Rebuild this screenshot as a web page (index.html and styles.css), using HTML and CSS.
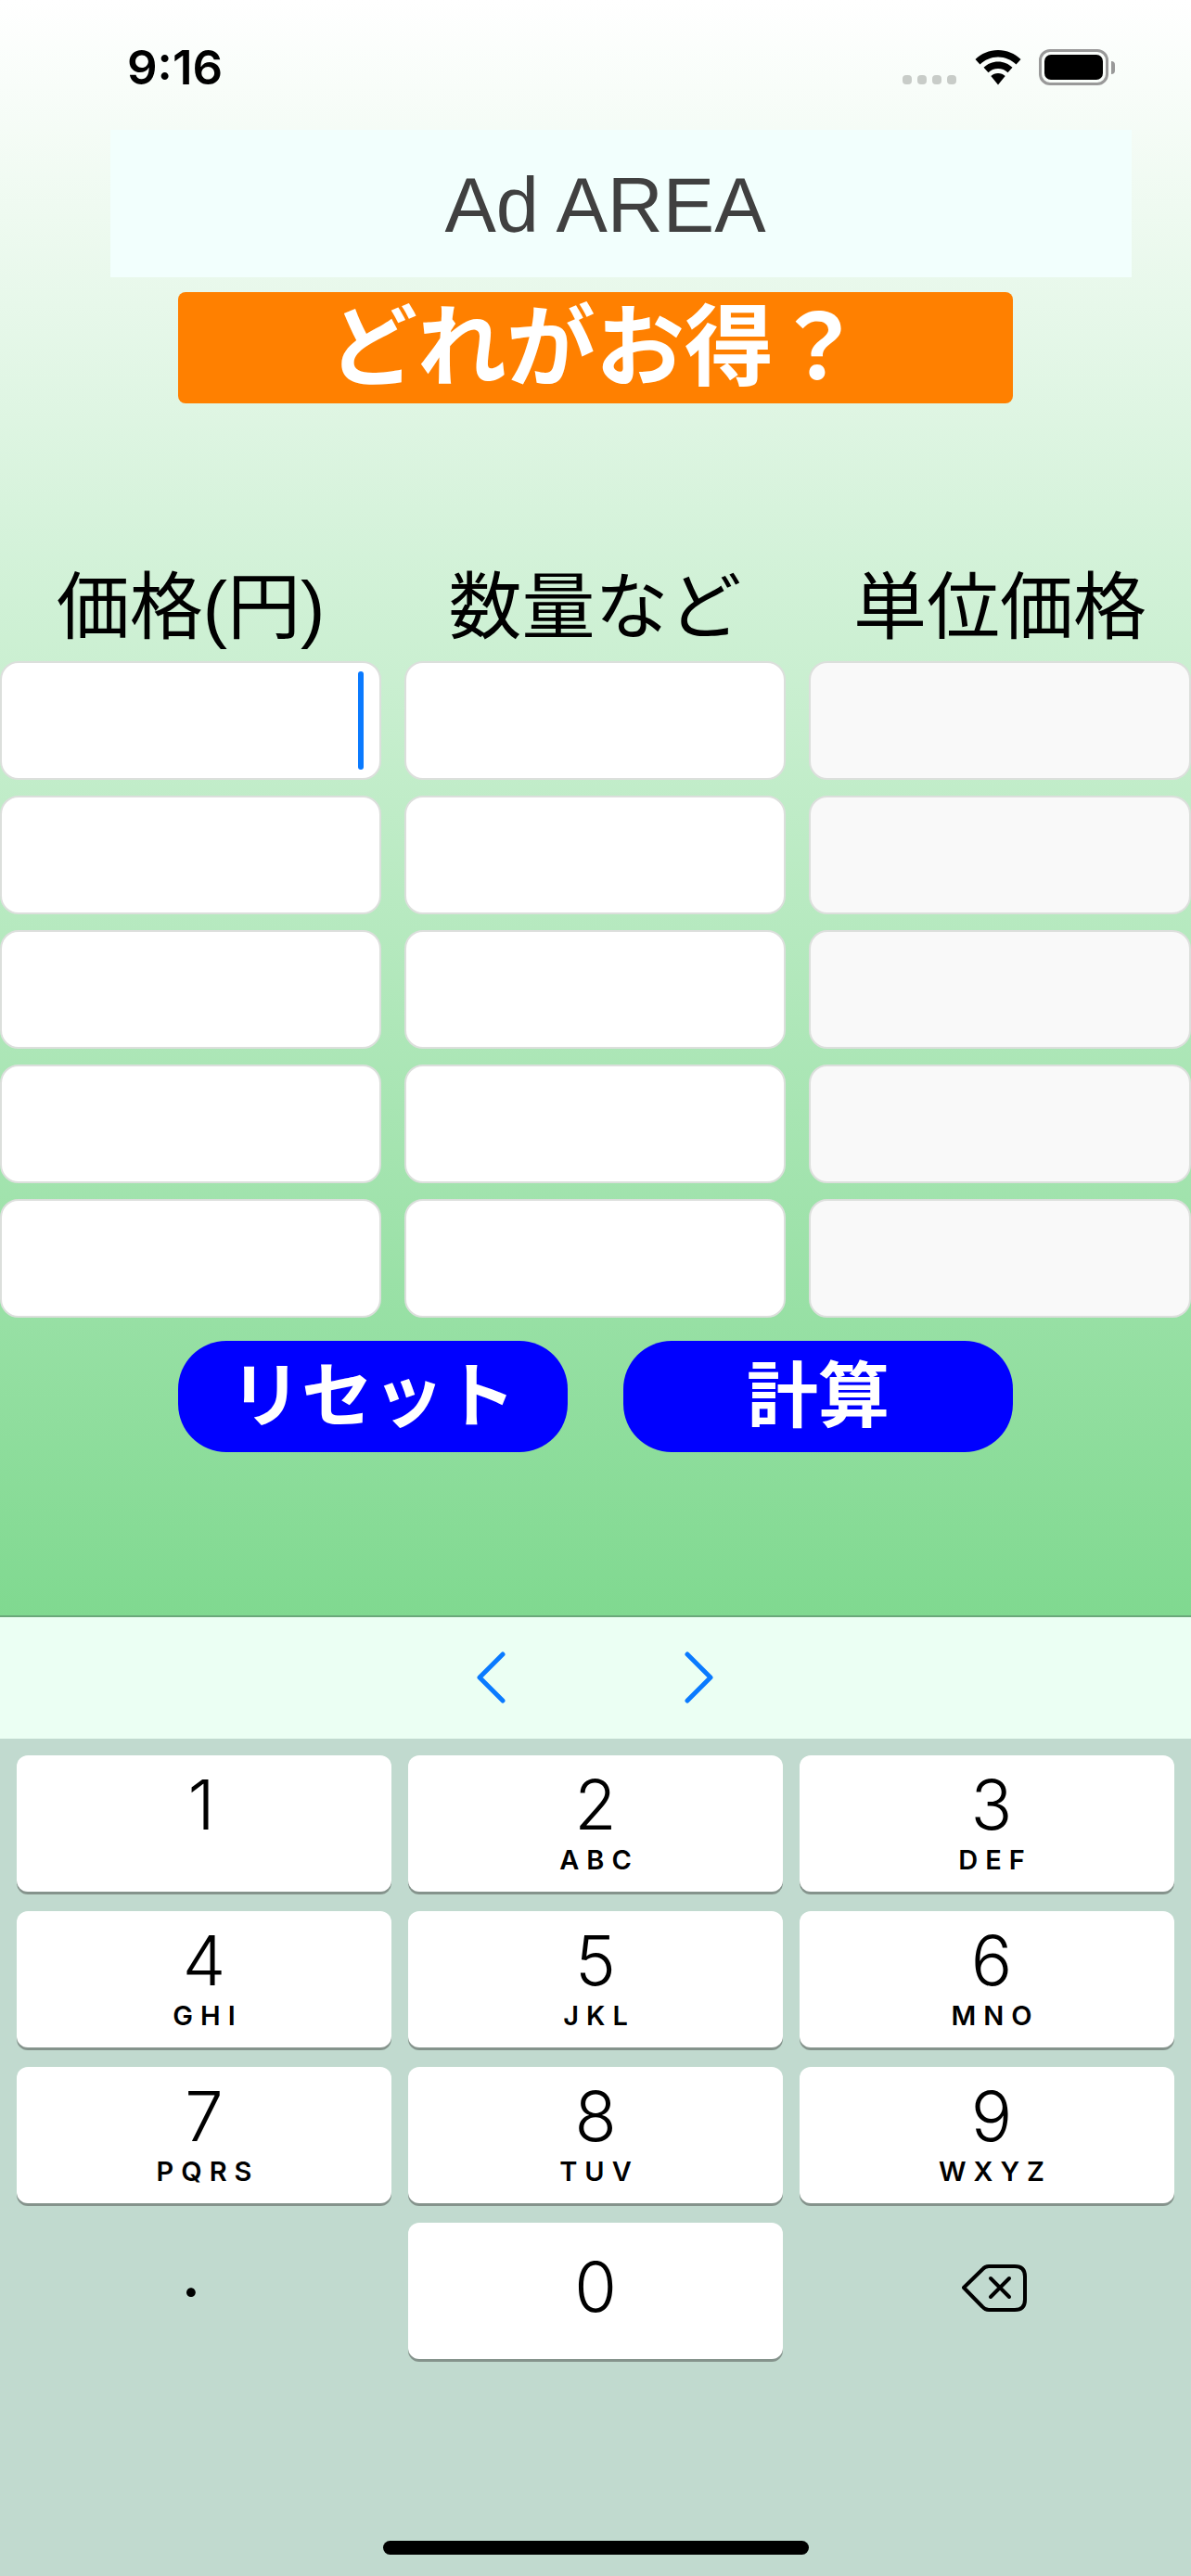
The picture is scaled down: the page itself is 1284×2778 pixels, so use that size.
FILE: index.html
```html
<!DOCTYPE html>
<html lang="ja">
<head>
    <meta charset="UTF-8">
    <meta name="viewport" content="width=device-width, initial-scale=1.0">
    <title>どれがお得？</title>
    <link rel="stylesheet" href="styles.css">
</head>
<body>
    <div class="screen">
        <div class="main">
            <div class="status-bar">
                <span class="time">9:16</span>
                <div class="status-icons">
                    <div class="signal"><i></i><i></i><i></i><i></i></div>
                    <svg class="wifi" width="50" height="38" viewBox="0 0 50 38">
                        <path d="M25 0C15.500 0 7 3.700 .5 10l5 5.500C10.600 10.500 17.500 7.500 25 7.500s14.400 3 19.500 8l5-5.500C43 3.700 34.500 0 25 0z"/>
                        <path d="M25 12.500c-6 0-11.400 2.400-15.500 6.300l5 5.400c2.700-2.600 6.400-4.200 10.500-4.200s7.800 1.600 10.500 4.200l5-5.400C36.400 14.900 31 12.500 25 12.500z"/>
                        <path d="M25 25c-3 0-5.700 1.200-7.700 3.100L25 37.500l7.700-9.400C30.700 26.200 28 25 25 25z"/>
                    </svg>
                    <div class="battery"><div class="battery-level"></div></div>
                    <div class="battery-nub"></div>
                </div>
            </div>

            <div class="ad-area">Ad AREA</div>
            <h1 class="title">どれがお得？</h1>

            <div class="table">
                <div class="col-label">価格(円)</div>
                <div class="col-label">数量など</div>
                <div class="col-label">単位価格</div>

                <div class="field focused"><span class="cursor"></span></div>
                <div class="field"></div>
                <div class="field result"></div>

                <div class="field"></div>
                <div class="field"></div>
                <div class="field result"></div>

                <div class="field"></div>
                <div class="field"></div>
                <div class="field result"></div>

                <div class="field"></div>
                <div class="field"></div>
                <div class="field result"></div>

                <div class="field"></div>
                <div class="field"></div>
                <div class="field result"></div>
            </div>

            <div class="actions">
                <button class="action-btn">リセット</button>
                <button class="action-btn">計算</button>
            </div>
        </div>

        <div class="toolbar">
            <svg class="chevron" width="32" height="56" viewBox="0 0 32 56"><path d="M28 3L3 28l25 25"/></svg>
            <svg class="chevron" width="32" height="56" viewBox="0 0 32 56"><path d="M4 3l25 25L4 53"/></svg>
        </div>

        <div class="keyboard">
            <div class="keys">
                <div class="key one"><span class="digit">1</span></div>
                <div class="key"><span class="digit">2</span><span class="letters">ABC</span></div>
                <div class="key right"><span class="digit">3</span><span class="letters">DEF</span></div>
                <div class="key"><span class="digit">4</span><span class="letters">GHI</span></div>
                <div class="key"><span class="digit">5</span><span class="letters">JKL</span></div>
                <div class="key right"><span class="digit">6</span><span class="letters">MNO</span></div>
                <div class="key"><span class="digit">7</span><span class="letters">PQRS</span></div>
                <div class="key"><span class="digit">8</span><span class="letters">TUV</span></div>
                <div class="key right"><span class="digit">9</span><span class="letters">WXYZ</span></div>
                <div class="key blank"><span class="dot">.</span></div>
                <div class="key zero"><span class="digit">0</span></div>
                <div class="key blank backspace">
                    <svg width="70" height="52" viewBox="0 0 70 52">
                        <path class="bs-line" d="M2 25L22 5.500Q25 2 29 2H57Q68 2 68 13V38Q68 49 57 49H29Q25 49 22 45.500z"/>
                        <path class="bs-line" d="M31 15l20 20M51 15L31 35"/>
                    </svg>
                </div>
            </div>
            <div class="home-indicator"></div>
        </div>
    </div>
</body>
</html>
```

FILE: styles.css
```css
* {
    box-sizing: border-box;
}
body {
    margin: 0;
    font-family: "Liberation Sans", "Noto Sans CJK JP", sans-serif;
    color: #000;
}
.screen {
    width: 1284px;
    height: 2778px;
    display: flex;
    flex-direction: column;
    overflow: hidden;
}
.main {
    height: 1742px;
    background: linear-gradient(to bottom, #ffffff, #80d990);
}

/* Status bar */
.status-bar {
    height: 140px;
    padding: 44px 82px 0 137px;
    display: flex;
    justify-content: space-between;
    align-items: flex-start;
}
.time {
    font-family: Inter, sans-serif;
    font-size: 51px;
    line-height: 58px;
    font-weight: 600;
}
.status-icons {
    display: flex;
    align-items: flex-start;
    padding-top: 9px;
}
.signal {
    display: flex;
    gap: 6px;
    margin-top: 28px;
    margin-right: 20px;
}
.signal i {
    width: 10px;
    height: 10px;
    border-radius: 4px;
    background-color: #c8ccc8;
}
.wifi {
    margin-top: 1px;
    margin-right: 19px;
}
.wifi path {
    fill: #000;
}
.battery {
    width: 75px;
    height: 39px;
    padding: 3px;
    border: 3px solid #999;
    border-radius: 12px;
}
.battery-level {
    height: 100%;
    background-color: #000;
    border-radius: 7px;
}
.battery-nub {
    width: 4px;
    height: 14px;
    margin: 13px 0 0 3px;
    background-color: #999;
    border-radius: 0 4px 4px 0;
}

/* Ad and title */
.ad-area {
    height: 159px;
    margin: 0 64px 0 119px;
    padding-right: 34px;
    padding-top: 5px;
    background-color: #f2fffd;
    color: #404040;
    font-size: 83px;
    line-height: 154px;
    text-align: center;
}
.title {
    height: 120px;
    margin: 16px 192px 0;
    background-color: #ff8000;
    border-radius: 8px;
    color: #fff;
    font-size: 96px;
    font-weight: bold;
    line-height: 120px;
    text-align: center;
}

/* Price table */
.table {
    display: grid;
    grid-template-columns: 411px 411px 412px;
    grid-template-rows: 96px repeat(5, 128px);
    column-gap: 25px;
    row-gap: 17px;
    margin-top: 165px;
}
.col-label {
    padding-top: 16px;
    font-size: 79px;
    line-height: 80px;
    text-align: center;
    white-space: nowrap;
}
.field {
    display: flex;
    justify-content: flex-end;
    align-items: center;
    padding-right: 17px;
    background-color: #fff;
    border: 2px solid #dcdfdc;
    border-radius: 20px;
}
.field.result {
    background-color: #f9f9f9;
}
.cursor {
    width: 6px;
    height: 106px;
    background-color: #0a7aff;
    border-radius: 3px;
}

/* Buttons */
.actions {
    display: flex;
    gap: 60px;
    margin-top: 25px;
    padding-left: 192px;
}
.action-btn {
    width: 420px;
    height: 120px;
    padding: 0;
    border: none;
    border-radius: 52px;
    background-color: #0000ff;
    color: #fff;
    font-family: inherit;
    font-size: 77px;
    font-weight: bold;
    line-height: 120px;
}

/* Keyboard toolbar */
.toolbar {
    height: 133px;
    padding: 37px 0 0 514px;
    display: flex;
    align-items: flex-start;
    gap: 191px;
    background-color: #ebfff3;
    border-top: 2px solid #6aa87a;
}
.chevron path {
    fill: none;
    stroke: #0a7aff;
    stroke-width: 5;
    stroke-linecap: round;
    stroke-linejoin: round;
}

/* Number pad */
.keyboard {
    flex: 1;
    padding-top: 18px;
    display: flex;
    flex-direction: column;
    align-items: center;
    background-color: #c1dacf;
}
.keys {
    display: grid;
    grid-template-columns: repeat(3, 404px);
    grid-auto-rows: 147px;
    gap: 21px 18px;
}
.key {
    display: flex;
    flex-direction: column;
    align-items: center;
    padding-top: 16px;
    background-color: #fff;
    border-radius: 12px;
    box-shadow: 0 3px 0 #85938c;
    font-family: Inter, sans-serif;
}
.key.one {
    padding-right: 6px;
}
.key.right {
    padding-left: 10px;
}
.key.zero {
    padding-top: 32px;
}
.key.blank {
    background: none;
    box-shadow: none;
}
.digit {
    font-size: 74px;
    line-height: 74px;
    font-weight: 350;
}
.letters {
    margin-top: 8px;
    padding-left: 8px;
    font-size: 29px;
    line-height: 29px;
    font-weight: 600;
    letter-spacing: 8px;
}
.dot {
    padding-right: 28px;
    font-size: 74px;
    line-height: 74px;
}
.backspace {
    padding-top: 45px;
    padding-left: 16px;
}
.bs-line {
    fill: none;
    stroke: #000;
    stroke-width: 4;
    stroke-linecap: round;
    stroke-linejoin: round;
}
.home-indicator {
    width: 459px;
    height: 15px;
    margin-top: auto;
    margin-bottom: 23px;
    background-color: #000;
    border-radius: 8px;
}
```
